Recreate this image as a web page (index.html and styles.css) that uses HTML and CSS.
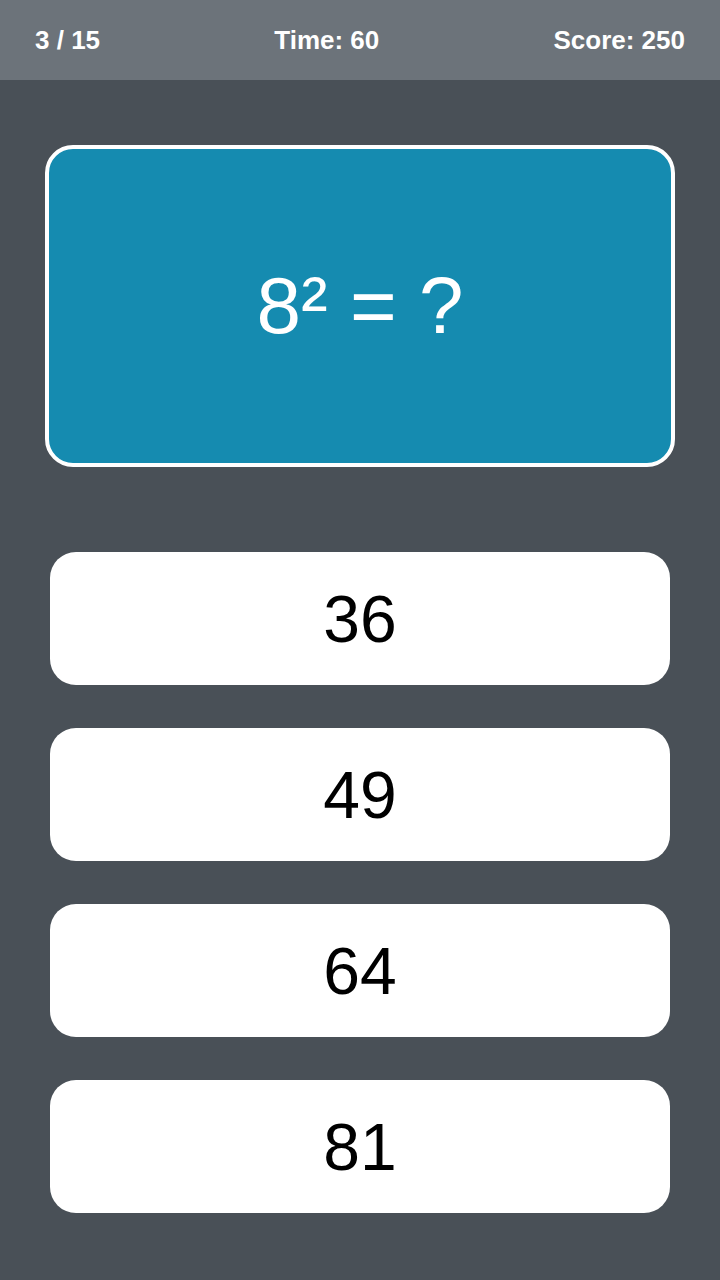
FILE: index.html
```html
<!DOCTYPE html>
<html lang="en">
<head>
  <meta charset="UTF-8">
  <title>Math Quiz</title>
  <meta name="viewport" content="width=device-width, initial-scale=1.0">
  <link rel="stylesheet" href="styles.css">
</head>
<body>

<header class="top-bar">
  <span id="progress">3 / 15</span>
  <span id="timer">Time: 60</span>
  <span id="score">Score: 250</span>
</header>

<main class="quiz">
  <div class="question-card">
    <p class="question">8² = ?</p>
  </div>

  <div class="answers">
    <button class="answer">36</button>
    <button class="answer">49</button>
    <button class="answer">64</button>
    <button class="answer">81</button>
  </div>
</main>

</body>
</html>
```

FILE: styles.css
```css
* { box-sizing: border-box; }

html, body {
  height: 100%;
}

body {
  margin: 0;
  font-family: 'Liberation Sans', Arial, sans-serif;
  background: #495057;
}

.top-bar {
  height: 80px;
  display: flex;
  justify-content: space-between;
  align-items: center;
  padding: 0 35px;
  background: #6c737a;
  color: white;
  font-size: 26px;
  font-weight: bold;
}

.quiz {
  padding: 65px 50px 0;
}

.question-card {
  height: 322px;
  margin: 0 -5px;
  display: flex;
  align-items: center;
  justify-content: center;
  background: #158bb0;
  border: 4px solid white;
  border-radius: 28px;
}

.question {
  margin: 0;
  color: white;
  font-size: 80px;
  line-height: 1;
}

.answers {
  display: flex;
  flex-direction: column;
  gap: 43px;
  margin-top: 85px;
}

.answer {
  height: 133px;
  border: none;
  border-radius: 26px;
  background: white;
  color: black;
  font-family: inherit;
  font-size: 66px;
  cursor: pointer;
}
```
